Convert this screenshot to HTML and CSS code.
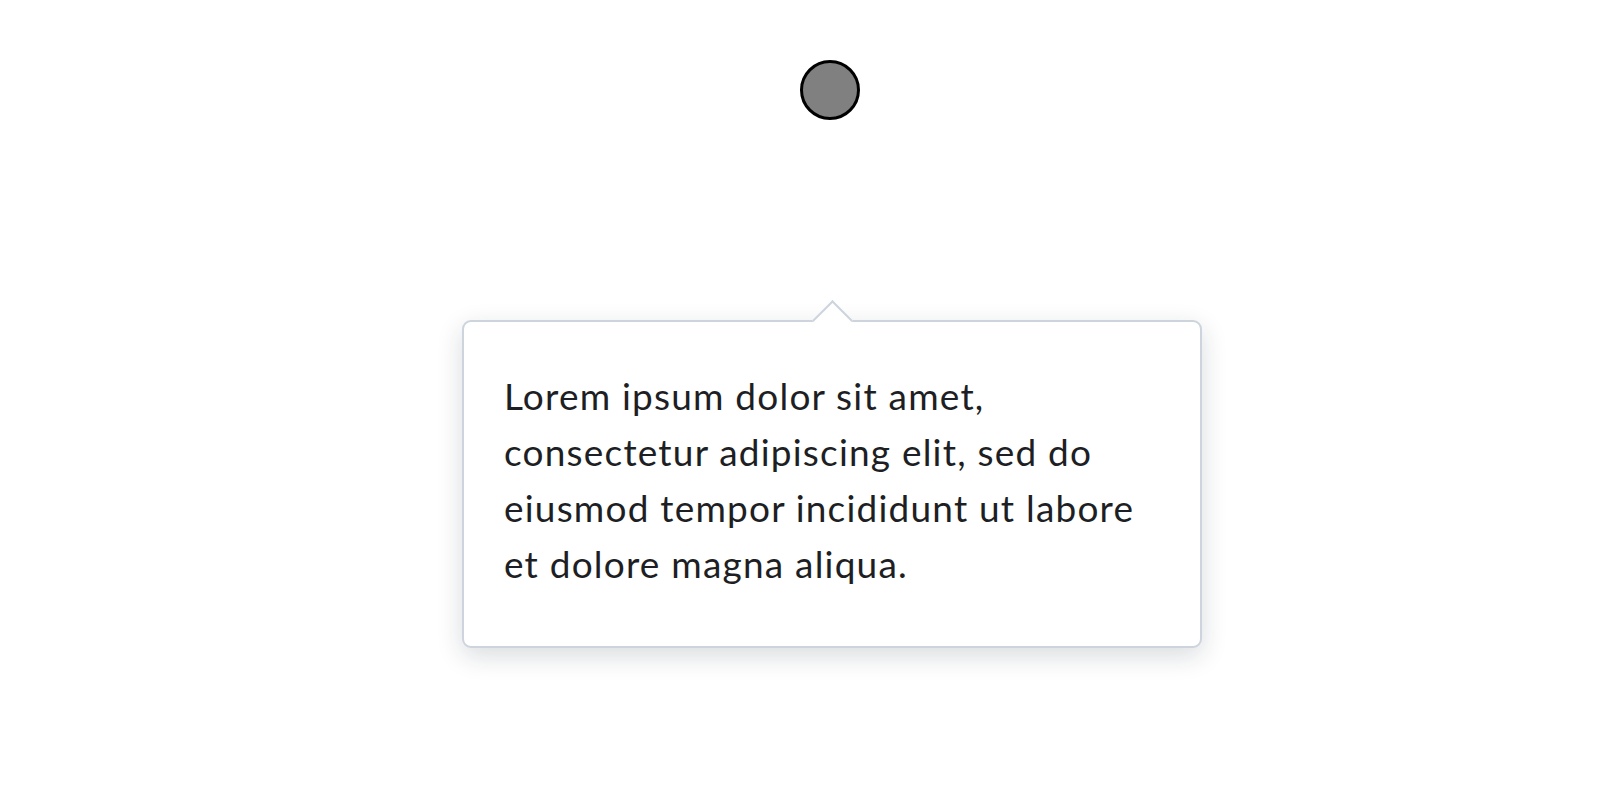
FILE: index.html
```html
<!DOCTYPE html>
<html>
<head>
<meta charset="utf-8">
<link rel="stylesheet" href="styles.css">
</head>
<body>
<div class="stage">
  <div class="anchor"></div>
  <div class="tooltip">
    <div class="arrow"></div>
    <p class="text">Lorem ipsum dolor sit amet, consectetur adipiscing elit, sed do eiusmod tempor incididunt ut labore et dolore magna aliqua.</p>
  </div>
</div>
</body>
</html>
```

FILE: styles.css
```css
html, body {
  margin: 0;
  padding: 0;
  background: #ffffff;
}
.stage {
  display: flex;
  flex-direction: column;
  align-items: flex-start;
  padding-top: 60px;
  padding-bottom: 120px;
}
.anchor {
  box-sizing: border-box;
  width: 60px;
  height: 60px;
  margin-left: 800px;
  border-radius: 50%;
  background: #808080;
  border: 3px solid #000000;
}
.tooltip {
  position: relative;
  box-sizing: border-box;
  margin-top: 200px;
  margin-left: 462px;
  width: 740px;
  background: #ffffff;
  border: 2px solid #cdd4dd;
  border-radius: 9px;
  box-shadow: 0 8px 26px rgba(20, 30, 50, 0.16);
  padding: 46px 40px 54px;
}
.arrow {
  position: absolute;
  top: -16px;
  left: 50%;
  width: 29px;
  height: 29px;
  margin-left: -14.5px;
  background: #ffffff;
  border-top: 2px solid #cdd4dd;
  border-left: 2px solid #cdd4dd;
  transform: rotate(45deg);
  box-sizing: border-box;
}
.text {
  margin: 0;
  font-family: Lato, "Liberation Sans", sans-serif;
  font-size: 37px;
  line-height: 56px;
  letter-spacing: 1.2px;
  color: #1e1f24;
}
```
